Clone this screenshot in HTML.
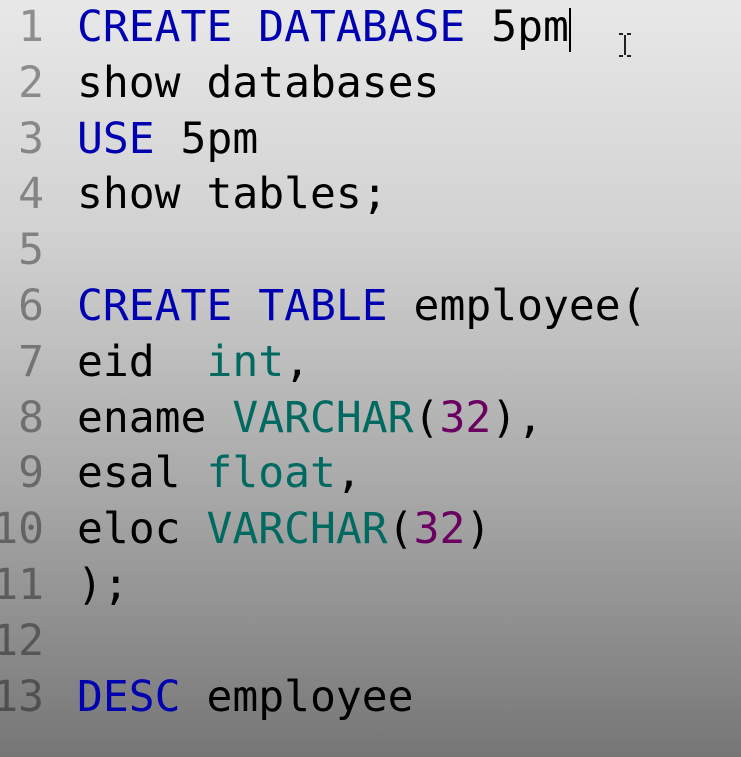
<!DOCTYPE html>
<html><head><style>
html,body{margin:0;padding:0}
body{width:741px;height:757px;overflow:hidden;position:relative;
background:linear-gradient(to bottom,#e8e8e8 0%,#d2d2d2 30%,#a8a8a8 65%,#767676 100%);
font-family:"DejaVu Sans Mono","Liberation Mono",monospace;font-size:43px;}
.l{position:absolute;left:0;width:741px;height:56px;line-height:56px;white-space:pre;}
.n{position:absolute;right:697px;top:0;color:rgba(0,0,0,0.38);text-align:right}
.c{position:absolute;left:77px;top:0;color:#000}
.k{color:#0000b0}.t{color:#006a60}.p{color:#6a0060}
</style></head><body>
<div class="l" style="top:-1px"><span class="n">1</span><span class="c"><span class="k">CREATE DATABASE</span> 5pm</span></div>
<div class="l" style="top:55px"><span class="n">2</span><span class="c">show databases</span></div>
<div class="l" style="top:111px"><span class="n">3</span><span class="c"><span class="k">USE</span> 5pm</span></div>
<div class="l" style="top:166px"><span class="n">4</span><span class="c">show tables;</span></div>
<div class="l" style="top:222px"><span class="n">5</span></div>
<div class="l" style="top:278px"><span class="n">6</span><span class="c"><span class="k">CREATE TABLE</span> employee(</span></div>
<div class="l" style="top:334px"><span class="n">7</span><span class="c">eid  <span class="t">int</span>,</span></div>
<div class="l" style="top:390px"><span class="n">8</span><span class="c">ename <span class="t">VARCHAR</span>(<span class="p">32</span>),</span></div>
<div class="l" style="top:445px"><span class="n">9</span><span class="c">esal <span class="t">float</span>,</span></div>
<div class="l" style="top:501px"><span class="n">10</span><span class="c">eloc <span class="t">VARCHAR</span>(<span class="p">32</span>)</span></div>
<div class="l" style="top:557px"><span class="n">11</span><span class="c">);</span></div>
<div class="l" style="top:613px"><span class="n">12</span></div>
<div class="l" style="top:669px"><span class="n">13</span><span class="c"><span class="k">DESC</span> employee</span></div>
<div style="position:absolute;left:569px;top:8px;width:2px;height:44px;background:#000"></div>
<svg style="position:absolute;left:616px;top:32px" width="18" height="26"><path d="M3 2h4M11 2h4M9 3v20M3 24h4M11 24h4" stroke="#222" stroke-width="2" fill="none"/></svg>
</body></html>
